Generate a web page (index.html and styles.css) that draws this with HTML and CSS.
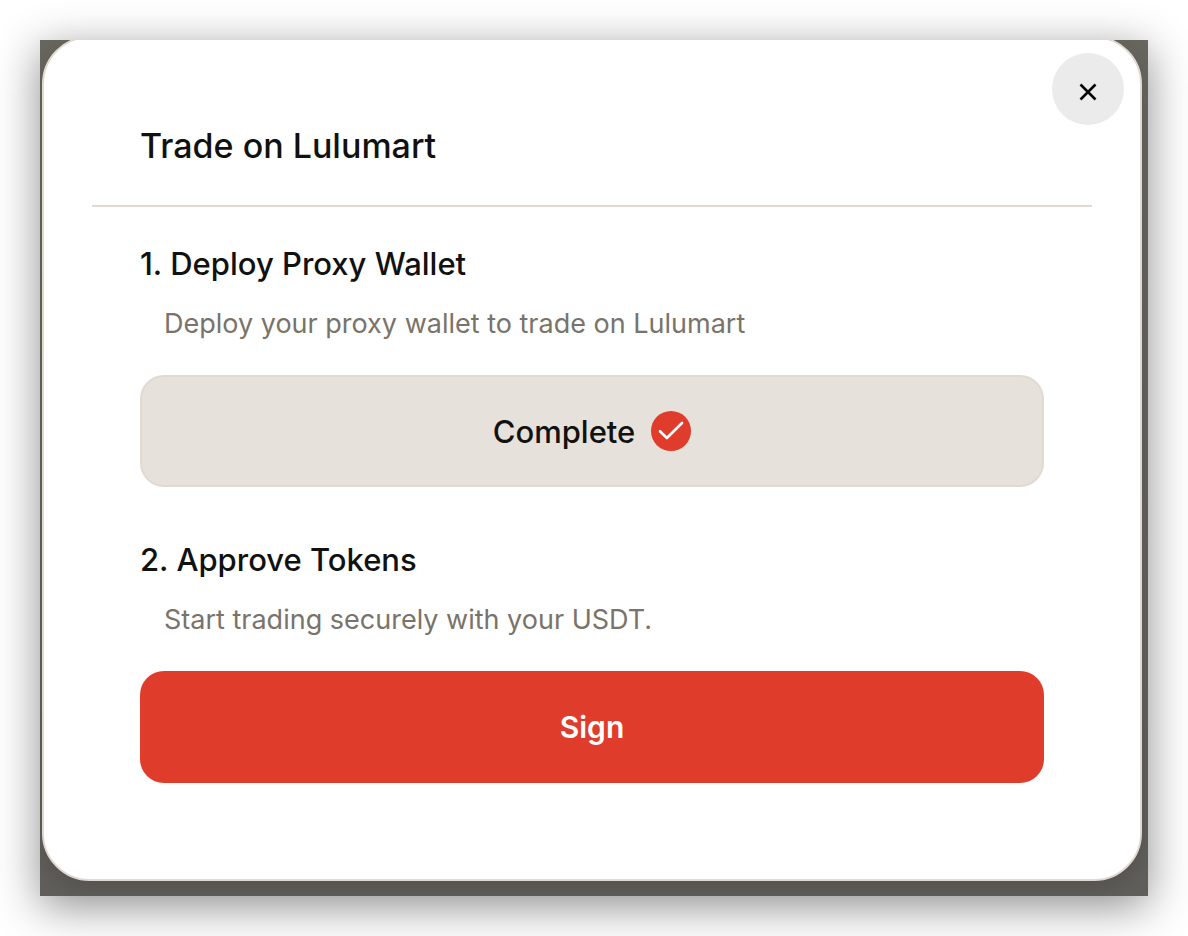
FILE: index.html
```html
<!DOCTYPE html>
<html lang="en">
<head>
    <meta charset="UTF-8">
    <meta name="viewport" content="width=device-width, initial-scale=1.0">
    <title>Trade on Lulumart</title>
    <link rel="stylesheet" href="styles.css">
</head>
<body>
    <div class="backdrop">
        <div class="modal" role="dialog" aria-labelledby="modal-title">
            <button class="close" type="button" aria-label="Close">
                <svg width="18" height="18" viewBox="0 0 18 18" fill="none" stroke="#08080c" stroke-width="2.6">
                    <path d="M1.5 1.5l15 15M16.5 1.5l-15 15"/>
                </svg>
            </button>

            <header class="modal-header">
                <h1 id="modal-title">Trade on Lulumart</h1>
            </header>

            <div class="steps">
                <section class="step">
                    <h2>1. Deploy Proxy Wallet</h2>
                    <p>Deploy your proxy wallet to trade on Lulumart</p>
                    <button class="btn btn-complete" type="button">
                        Complete
                        <svg width="40" height="40" viewBox="0 0 40 40" fill="none">
                            <circle cx="20" cy="20" r="20" fill="#df3c2c"/>
                            <path d="M9 20.2l6.9 6.8L31 12" stroke="#fff" stroke-width="2.6" stroke-linecap="round" stroke-linejoin="round"/>
                        </svg>
                    </button>
                </section>

                <section class="step">
                    <h2>2. Approve Tokens</h2>
                    <p>Start trading securely with your USDT.</p>
                    <button class="btn btn-sign" type="button">Sign</button>
                </section>
            </div>
        </div>
    </div>
</body>
</html>
```
FILE: styles.css
```css
* {
    box-sizing: border-box;
}
body {
    margin: 0;
    padding: 40px;
    background-color: #fff;
    font-family: Inter, sans-serif;
    color: #11110f;
}
h1, h2, p {
    margin: 0;
}
.backdrop {
    padding: 0 6px 15px 2px;
    overflow: hidden;
    background: linear-gradient(#67675f, #615f5b);
    box-shadow: 0 10px 42px rgba(0, 0, 0, 0.45);
}
.modal {
    position: relative;
    margin-top: -4px;
    padding: 0 48px 96px;
    background-color: #fff;
    border: 2px solid #e1dad3;
    border-radius: 48px;
    box-shadow: 0 8px 24px rgba(0, 0, 0, 0.15);
}
.close {
    position: absolute;
    top: 15px;
    right: 16px;
    display: flex;
    align-items: center;
    justify-content: center;
    width: 72px;
    height: 72px;
    padding: 6px 0 0;
    border: none;
    border-radius: 50%;
    background-color: #ebebeb;
    cursor: pointer;
}
.modal-header {
    padding: 84px 48px 35px;
    border-bottom: 2px solid #e1dad3;
}
h1 {
    font-size: 34px;
    font-weight: 500;
    line-height: 48px;
}
.steps {
    display: flex;
    flex-direction: column;
    gap: 48px;
    padding: 32px 48px 0;
}
h2 {
    font-size: 31px;
    font-weight: 500;
    line-height: 50px;
}
.step p {
    margin: 14px 0 30px;
    padding-left: 24px;
    font-size: 27px;
    line-height: 42px;
    color: #79736a;
}
.btn {
    display: flex;
    align-items: center;
    justify-content: center;
    gap: 16px;
    width: 100%;
    height: 112px;
    border-radius: 24px;
    font-family: inherit;
    cursor: pointer;
}
.btn-complete {
    border: 2px solid #e1dad3;
    background-color: #e6e1db;
    font-size: 31px;
    font-weight: 500;
    color: #11110f;
}
.btn-sign {
    border: none;
    background-color: #df3c2c;
    font-size: 30px;
    font-weight: 600;
    color: #fff;
}
```
